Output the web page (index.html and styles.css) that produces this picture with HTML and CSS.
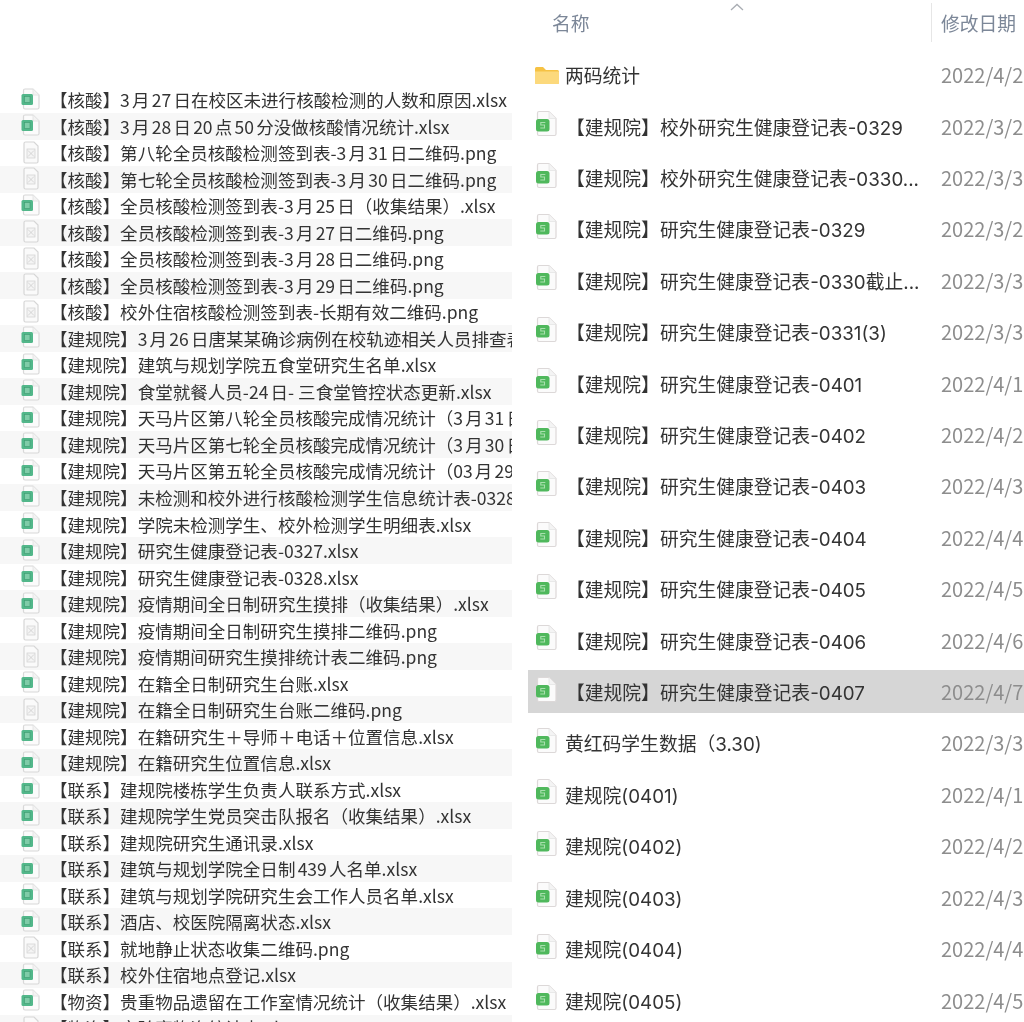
FILE: index.html
```html
<!DOCTYPE html>
<html lang="zh-CN">
<head>
<meta charset="utf-8">
<title>文件列表</title>
<link rel="stylesheet" href="styles.css">
</head>
<body>
<svg class="defs" width="0" height="0" aria-hidden="true">
  <symbol id="mac-x" viewBox="0 0 20 24">
    <path d="M5 1H13L19 7V19.500Q19 21 17.500 21H5Q3.500 21 3.500 19.500V2.500Q3.500 1 5 1Z" fill="#fbfbfb" stroke="#d8d8d8" stroke-width="1.200"/>
    <path d="M13 1V7H19" fill="#f3f3f3" stroke="#e2e2e2" stroke-width=".8"/>
    <rect x="1.500" y="6" width="11.500" height="11" rx="1.500" fill="#52b78a"/>
    <rect x="4.500" y="8.500" width="5.500" height="6" fill="#7fcca8" stroke="#3e9c70" stroke-width=".6"/>
  </symbol>
  <symbol id="mac-p" viewBox="0 0 20 24">
    <path d="M5.500 1H14L18 5V20.500Q18 22 16.500 22H5.500Q4 22 4 20.500V2.500Q4 1 5.500 1Z" fill="#fafafa" stroke="#d6d6d6" stroke-width="1.200"/>
    <rect x="7" y="8" width="8" height="9" fill="#f4f4f4" stroke="#cfcfcf" stroke-width=".7"/>
    <path d="M8 9.500L14 15.500M14 9.500L8 15.500" stroke="#cacaca" stroke-width=".7"/>
  </symbol>
  <symbol id="win-s" viewBox="0 0 24 28">
    <path d="M4 1.500H14L21 8.500V24Q21 25.500 19.500 25.500H4Q2.500 25.500 2.500 24V3Q2.500 1.500 4 1.500Z" fill="#fbfbfb" stroke="#dcd8d8" stroke-width="1.200"/>
    <path d="M14 1.500V8.500H21" fill="#f4f4f4" stroke="#e4e4e4" stroke-width=".8"/>
    <rect x="1" y="9" width="13.500" height="12.500" rx="2.500" fill="#4fb85c"/>
    <path d="M10.300 12.500H5.800V15H9.500V18H5.300" fill="none" stroke="#a9dfae" stroke-width="1.100"/>
  </symbol>
  <symbol id="folder" viewBox="0 0 24 18">
    <path d="M0 2.500Q0 1 1.500 1H8L11 4H22.500Q24 4 24 5.500V16.500Q24 18 22.500 18H1.500Q0 18 0 16.500Z" fill="#f6c244"/>
    <path d="M0 5.500H24V16.500Q24 18 22.500 18H1.500Q0 18 0 16.500Z" fill="#fcd97c"/>
  </symbol>
</svg>
<main class="sheet">
  <section class="left">
    <ul class="mac-list">
      <li class="mac-row"><svg class="mac-icon"><use href="#mac-x"/></svg><span>【核酸】3月27日在校区未进行核酸检测的人数和原因<i class="ext">.xlsx</i></span></li>
      <li class="mac-row"><svg class="mac-icon"><use href="#mac-x"/></svg><span>【核酸】3月28日20点50分没做核酸情况统计<i class="ext">.xlsx</i></span></li>
      <li class="mac-row"><svg class="mac-icon"><use href="#mac-p"/></svg><span>【核酸】第八轮全员核酸检测签到表-3月31日二维码<i class="ext">.png</i></span></li>
      <li class="mac-row"><svg class="mac-icon"><use href="#mac-p"/></svg><span>【核酸】第七轮全员核酸检测签到表-3月30日二维码<i class="ext">.png</i></span></li>
      <li class="mac-row"><svg class="mac-icon"><use href="#mac-x"/></svg><span>【核酸】全员核酸检测签到表-3月25日（收集结果）.xlsx</span></li>
      <li class="mac-row"><svg class="mac-icon"><use href="#mac-p"/></svg><span>【核酸】全员核酸检测签到表-3月27日二维码<i class="ext">.png</i></span></li>
      <li class="mac-row"><svg class="mac-icon"><use href="#mac-p"/></svg><span>【核酸】全员核酸检测签到表-3月28日二维码<i class="ext">.png</i></span></li>
      <li class="mac-row"><svg class="mac-icon"><use href="#mac-p"/></svg><span>【核酸】全员核酸检测签到表-3月29日二维码<i class="ext">.png</i></span></li>
      <li class="mac-row"><svg class="mac-icon"><use href="#mac-p"/></svg><span>【核酸】校外住宿核酸检测签到表-长期有效二维码<i class="ext">.png</i></span></li>
      <li class="mac-row"><svg class="mac-icon"><use href="#mac-x"/></svg><span>【建规院】3月26日唐某某确诊病例在校轨迹相关人员排查表<i class="ext">.xlsx</i></span></li>
      <li class="mac-row"><svg class="mac-icon"><use href="#mac-x"/></svg><span>【建规院】建筑与规划学院五食堂研究生名单<i class="ext">.xlsx</i></span></li>
      <li class="mac-row"><svg class="mac-icon"><use href="#mac-x"/></svg><span>【建规院】食堂就餐人员-24日- 三食堂管控状态更新<i class="ext">.xlsx</i></span></li>
      <li class="mac-row"><svg class="mac-icon"><use href="#mac-x"/></svg><span>【建规院】天马片区第八轮全员核酸完成情况统计（3月31日）.xlsx</span></li>
      <li class="mac-row"><svg class="mac-icon"><use href="#mac-x"/></svg><span>【建规院】天马片区第七轮全员核酸完成情况统计（3月30日）.xlsx</span></li>
      <li class="mac-row"><svg class="mac-icon"><use href="#mac-x"/></svg><span>【建规院】天马片区第五轮全员核酸完成情况统计（03月29日）.xlsx</span></li>
      <li class="mac-row"><svg class="mac-icon"><use href="#mac-x"/></svg><span>【建规院】未检测和校外进行核酸检测学生信息统计表-0328.xlsx</span></li>
      <li class="mac-row"><svg class="mac-icon"><use href="#mac-x"/></svg><span>【建规院】学院未检测学生、校外检测学生明细表<i class="ext">.xlsx</i></span></li>
      <li class="mac-row"><svg class="mac-icon"><use href="#mac-x"/></svg><span>【建规院】研究生健康登记表-0327.xlsx</span></li>
      <li class="mac-row"><svg class="mac-icon"><use href="#mac-x"/></svg><span>【建规院】研究生健康登记表-0328.xlsx</span></li>
      <li class="mac-row"><svg class="mac-icon"><use href="#mac-x"/></svg><span>【建规院】疫情期间全日制研究生摸排（收集结果）.xlsx</span></li>
      <li class="mac-row"><svg class="mac-icon"><use href="#mac-p"/></svg><span>【建规院】疫情期间全日制研究生摸排二维码<i class="ext">.png</i></span></li>
      <li class="mac-row"><svg class="mac-icon"><use href="#mac-p"/></svg><span>【建规院】疫情期间研究生摸排统计表二维码<i class="ext">.png</i></span></li>
      <li class="mac-row"><svg class="mac-icon"><use href="#mac-x"/></svg><span>【建规院】在籍全日制研究生台账<i class="ext">.xlsx</i></span></li>
      <li class="mac-row"><svg class="mac-icon"><use href="#mac-p"/></svg><span>【建规院】在籍全日制研究生台账二维码<i class="ext">.png</i></span></li>
      <li class="mac-row"><svg class="mac-icon"><use href="#mac-x"/></svg><span>【建规院】在籍研究生＋导师＋电话＋位置信息<i class="ext">.xlsx</i></span></li>
      <li class="mac-row"><svg class="mac-icon"><use href="#mac-x"/></svg><span>【建规院】在籍研究生位置信息<i class="ext">.xlsx</i></span></li>
      <li class="mac-row"><svg class="mac-icon"><use href="#mac-x"/></svg><span>【联系】建规院楼栋学生负责人联系方式<i class="ext">.xlsx</i></span></li>
      <li class="mac-row"><svg class="mac-icon"><use href="#mac-x"/></svg><span>【联系】建规院学生党员突击队报名（收集结果）.xlsx</span></li>
      <li class="mac-row"><svg class="mac-icon"><use href="#mac-x"/></svg><span>【联系】建规院研究生通讯录<i class="ext">.xlsx</i></span></li>
      <li class="mac-row"><svg class="mac-icon"><use href="#mac-x"/></svg><span>【联系】建筑与规划学院全日制439人名单<i class="ext">.xlsx</i></span></li>
      <li class="mac-row"><svg class="mac-icon"><use href="#mac-x"/></svg><span>【联系】建筑与规划学院研究生会工作人员名单<i class="ext">.xlsx</i></span></li>
      <li class="mac-row"><svg class="mac-icon"><use href="#mac-x"/></svg><span>【联系】酒店、校医院隔离状态<i class="ext">.xlsx</i></span></li>
      <li class="mac-row"><svg class="mac-icon"><use href="#mac-p"/></svg><span>【联系】就地静止状态收集二维码<i class="ext">.png</i></span></li>
      <li class="mac-row"><svg class="mac-icon"><use href="#mac-x"/></svg><span>【联系】校外住宿地点登记<i class="ext">.xlsx</i></span></li>
      <li class="mac-row"><svg class="mac-icon"><use href="#mac-x"/></svg><span>【物资】贵重物品遗留在工作室情况统计（收集结果）.xlsx</span></li>
      <li class="mac-row"><svg class="mac-icon"><use href="#mac-p"/></svg><span>【物资】实验室物资统计表<i class="ext">.xlsx</i></span></li>
    </ul>
  </section>
  <section class="right">
    <header class="win-head">
      <span class="caret"><svg width="14" height="8" viewBox="0 0 14 8"><path d="M1 7L7 1.500L13 7" fill="none" stroke="#a9adb3" stroke-width="1.300"/></svg></span>
      <span class="head-name">名称</span>
      <span class="head-date">修改日期</span>
    </header>
    <ul class="win-list">
      <li class="win-row"><svg class="folder"><use href="#folder"/></svg><span class="name short">两码统计</span><span class="date">2022/4/2</span></li>
      <li class="win-row"><svg class="win-icon"><use href="#win-s"/></svg><span class="name">【建规院】校外研究生健康登记表-0329</span><span class="date">2022/3/2</span></li>
      <li class="win-row"><svg class="win-icon"><use href="#win-s"/></svg><span class="name">【建规院】校外研究生健康登记表-0330...</span><span class="date">2022/3/3</span></li>
      <li class="win-row"><svg class="win-icon"><use href="#win-s"/></svg><span class="name">【建规院】研究生健康登记表-0329</span><span class="date">2022/3/2</span></li>
      <li class="win-row"><svg class="win-icon"><use href="#win-s"/></svg><span class="name">【建规院】研究生健康登记表-0330截止...</span><span class="date">2022/3/3</span></li>
      <li class="win-row"><svg class="win-icon"><use href="#win-s"/></svg><span class="name">【建规院】研究生健康登记表-0331(3)</span><span class="date">2022/3/3</span></li>
      <li class="win-row"><svg class="win-icon"><use href="#win-s"/></svg><span class="name">【建规院】研究生健康登记表-0401</span><span class="date">2022/4/1</span></li>
      <li class="win-row"><svg class="win-icon"><use href="#win-s"/></svg><span class="name">【建规院】研究生健康登记表-0402</span><span class="date">2022/4/2</span></li>
      <li class="win-row"><svg class="win-icon"><use href="#win-s"/></svg><span class="name">【建规院】研究生健康登记表-0403</span><span class="date">2022/4/3</span></li>
      <li class="win-row"><svg class="win-icon"><use href="#win-s"/></svg><span class="name">【建规院】研究生健康登记表-0404</span><span class="date">2022/4/4</span></li>
      <li class="win-row"><svg class="win-icon"><use href="#win-s"/></svg><span class="name">【建规院】研究生健康登记表-0405</span><span class="date">2022/4/5</span></li>
      <li class="win-row"><svg class="win-icon"><use href="#win-s"/></svg><span class="name">【建规院】研究生健康登记表-0406</span><span class="date">2022/4/6</span></li>
      <li class="win-row selected"><svg class="win-icon"><use href="#win-s"/></svg><span class="name">【建规院】研究生健康登记表-0407</span><span class="date">2022/4/7</span></li>
      <li class="win-row"><svg class="win-icon"><use href="#win-s"/></svg><span class="name short">黄红码学生数据（3.30)</span><span class="date">2022/3/3</span></li>
      <li class="win-row"><svg class="win-icon"><use href="#win-s"/></svg><span class="name short">建规院(0401)</span><span class="date">2022/4/1</span></li>
      <li class="win-row"><svg class="win-icon"><use href="#win-s"/></svg><span class="name short">建规院(0402)</span><span class="date">2022/4/2</span></li>
      <li class="win-row"><svg class="win-icon"><use href="#win-s"/></svg><span class="name short">建规院(0403)</span><span class="date">2022/4/3</span></li>
      <li class="win-row"><svg class="win-icon"><use href="#win-s"/></svg><span class="name short">建规院(0404)</span><span class="date">2022/4/4</span></li>
      <li class="win-row"><svg class="win-icon"><use href="#win-s"/></svg><span class="name short">建规院(0405)</span><span class="date">2022/4/5</span></li>
    </ul>
  </section>
</main>
</body>
</html>
```

FILE: styles.css
```css
* { box-sizing: border-box; }
html, body { margin: 0; padding: 0; background: #fff; }
body { height: 1022px; overflow: hidden; font-family: "Noto Sans CJK SC", "Noto Sans", sans-serif; }
.defs { display: block; height: 0; }
ul { list-style: none; margin: 0; padding: 0; }
.sheet { display: flex; width: 1024px; height: 1022px; overflow: hidden; filter: blur(0.4px); }
.left, .right { width: 512px; flex: none; overflow: hidden; }

.left { padding-top: 86.500px; }
.mac-row { display: flex; align-items: center; height: 26.53px; padding-left: 20px; white-space: nowrap; overflow: hidden; color: #333; font-size: 17.55px; text-autospace: normal; }
.mac-row:nth-child(even) { background: #f7f7f7; }
.mac-icon { width: 20px; height: 24px; flex: none; margin-right: 10px; }
.ext { font-style: normal; margin-left: -0.125em; }

.right { padding-left: 16px; }
.win-head { position: relative; display: flex; height: 53px; font-size: 18.800px; color: #7c8798; }
.caret { position: absolute; left: 202px; top: 3px; line-height: 0; }
.head-name { margin: 10px 0 0 24px; width: 379px; line-height: 26px; }
.head-date { margin-top: 3px; padding: 7px 0 0 9px; line-height: 26px; border-left: 1px solid #e6e6e6; height: 39px; }
.win-list { display: flex; flex-direction: column; gap: 8px; }
.win-row { display: flex; align-items: center; height: 43.420px; padding-left: 7px; white-space: nowrap; color: #333; font-size: 18.800px; }
.win-row.selected { background: #d6d6d6; }
.win-icon { width: 24px; height: 28px; flex: none; margin-right: -1px; margin-top: -4px; }
.folder { width: 24px; height: 18px; flex: none; margin-right: -1px; }
.name { width: 383px; flex: none; padding-left: 8px; overflow: hidden; font-family: Inter, "Noto Sans CJK SC", sans-serif; }
.name.short { padding-left: 7px; }
.date { color: #8d8d8d; font-size: 20px; }
```
